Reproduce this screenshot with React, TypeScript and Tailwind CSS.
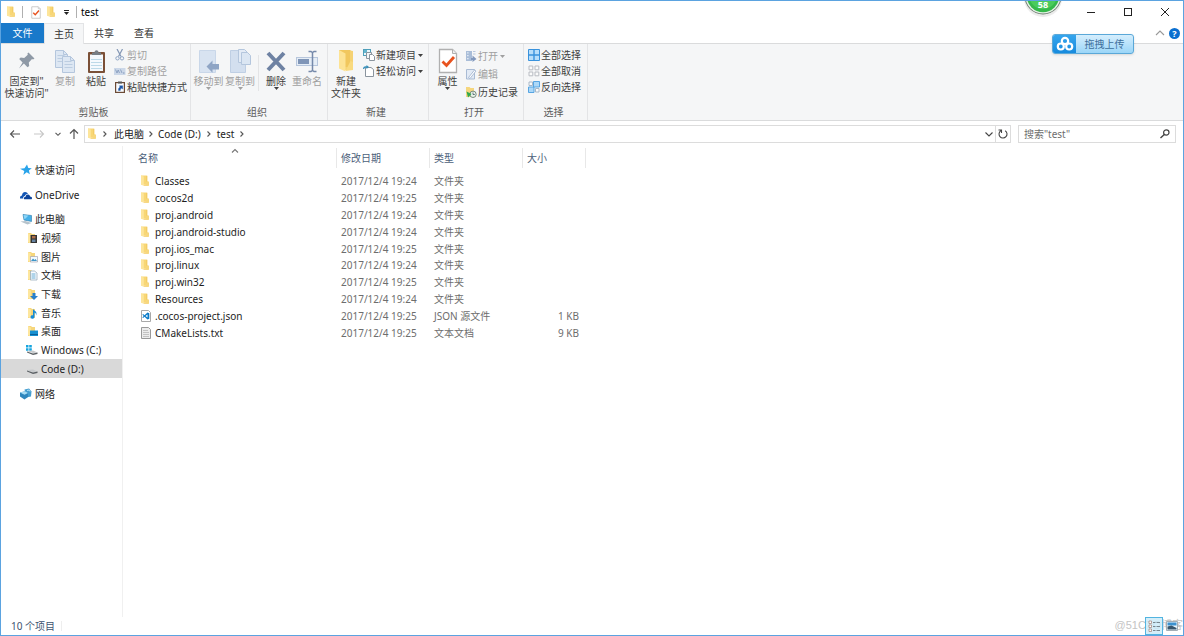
import React from 'react';
import type { ReactNode } from 'react';

function FolderIcon({ className = 'h-3 w-3' }: { className?: string }) {
  return (
    <svg viewBox="1 0 12 12" className={className} aria-hidden="true">
      <path d="M2 .5h5.5v9H2z" fill="#f8d775" />
      <path d="M7 .8h1.4v5.6l1.4.5v3.8H4.6V9.4H7z" fill="#f3cc66" />
      <path d="M2 .5l2.800 1v9.300L2 9.800z" fill="#fde59a" />
      <path d="M7.3 6.4h2.5v4.2H6.3z" fill="#f7d77d" />
    </svg>
  );
}

function BigFolderIcon() {
  return (
    <svg viewBox="0 0 20 26" className="h-[26px] w-5" aria-hidden="true">
      <path d="M3 2h11.5v18H3z" fill="#f1c75d" />
      <path d="M14 2.5l3 .5v19H7v-3h7z" fill="#f5d273" />
      <path d="M3 2l6.5 3.5v18L3 20.5z" fill="#fde394" />
      <path d="M14.5 13l2.5 1v8l-7.500 1z" fill="#f9da7f" />
    </svg>
  );
}

function PinIcon() {
  return (
    <svg viewBox="0 0 20 26" className="h-[26px] w-5" aria-hidden="true">
      <path d="M11.500 4.500l6 6-1.500 1-1-.4-3.200 3.400.4 3.500-1.700 1.300-3.600-3.700L2 20.500l3.600-6-3.400-3.400L3.700 9.500l3.500.4L10.800 6.800l-.4-1.200z" fill="#8e99a6" />
    </svg>
  );
}

function Page({ x, y, w, h }: { x: number; y: number; w: number; h: number }) {
  return (
    <g>
      <path d={`M${x} ${y}h${w - 4}l4 4v${h - 4}h${-w}z`} fill="#dde7f3" stroke="#b4c6dd" />
      <path d={`M${x + w - 4} ${y}v4h4`} fill="none" stroke="#b4c6dd" />
      <path d={`M${x + 2} ${y + 5}h${w - 5}M${x + 2} ${y + 8}h${w - 4}M${x + 2} ${y + 11}h${w - 4}`} stroke="#bccde1" />
    </g>
  );
}

function CopyIcon() {
  return (
    <svg viewBox="0 0 22 26" className="h-[26px] w-[22px]" aria-hidden="true">
      <Page x={1.5} y={2.5} w={12} h={17} />
      <Page x={8.5} y={8.500} w={12} h={16} />
    </svg>
  );
}

function PasteIcon() {
  return (
    <svg viewBox="0 0 20 26" className="h-[26px] w-5" aria-hidden="true">
      <rect x="2" y="4" width="17" height="21" rx="1" fill="#7b5037" />
      <rect x="4" y="6.500" width="13" height="16.500" fill="#f4f9fd" />
      <path d="M5 11.500h11M5 14.500h11M5 17.500h11M5 20.500h11" stroke="#bcd9e8" />
      <path d="M6 7V4.500h2.500C8.500 1.500 12.500 1.500 12.500 4.500H15V7z" fill="#777f86" />
    </svg>
  );
}

function MoveToIcon() {
  return (
    <svg viewBox="0 0 22 26" className="h-[26px] w-[22px]" aria-hidden="true">
      <path d="M1.500 2.500h16v22h-16z" fill="#d8e3f1" stroke="#c9d7e9" />
      <path d="M8.500 18.500l6-6v3.500H21v5.500h-6.500v3.200z" fill="#8fa5c5" />
    </svg>
  );
}

function CopyToIcon() {
  return (
    <svg viewBox="0 0 22 26" className="h-[26px] w-[22px]" aria-hidden="true">
      <path d="M1.500 2.500h15v22h-15z" fill="#d3dfef" stroke="#bfcfe4" />
      <path d="M9.500 1.500h6l3 3v10h-9z" fill="#e3ebf6" stroke="#b4c6dd" />
      <path d="M12.500 4.500h6l3 3v9h-9z" fill="#dbe6f3" stroke="#b4c6dd" />
    </svg>
  );
}

function DeleteIcon() {
  return (
    <svg viewBox="0 0 22 26" className="h-[26px] w-[22px]" aria-hidden="true">
      <path d="M3 5l16 17M19 5L3 22" stroke="#6e82a3" strokeWidth="4" />
    </svg>
  );
}

function RenameIcon() {
  return (
    <svg viewBox="0 0 24 26" className="h-[26px] w-6" aria-hidden="true">
      <rect x="1.500" y="9.500" width="21" height="8" fill="#e5edf6" stroke="#b7c6dc" />
      <rect x="3" y="11" width="11" height="5" fill="#7f95b7" />
      <path d="M13.500 3.500h2.500l1.500 1 1.500-1H21.500M17.500 4v19M13.500 23.500H16l1.500-1 1.500 1h2.500" fill="none" stroke="#7589aa" strokeWidth="1.500" />
    </svg>
  );
}

function CheckPageIcon({ className }: { className: string }) {
  return (
    <svg viewBox="0 0 20 26" className={className} aria-hidden="true">
      <path d="M1.500 1.500h13l4 4v19h-17z" fill="#fff" stroke="#b0b0b0" strokeWidth="1.300" />
      <path d="M14.500 1.500v4h4" fill="#eee" stroke="#b0b0b0" />
      <path d="M4.500 13.500l4 4 7.500-8.500" fill="none" stroke="#e8531f" strokeWidth="2.800" />
    </svg>
  );
}

function Small({ children }: { children: ReactNode }) {
  return (
    <svg viewBox="0 0 12 12" className="h-3 w-3 shrink-0" aria-hidden="true">
      {children}
    </svg>
  );
}

const scissors = (
  <Small>
    <path d="M3 0l4 7.500M8.500 0L4.500 7.500" stroke="#8396b4" strokeWidth="1.200" />
    <circle cx="3.500" cy="9.300" r="1.700" fill="none" stroke="#8fa5c5" />
    <circle cx="8" cy="9.300" r="1.700" fill="none" stroke="#8fa5c5" />
  </Small>
);
const pathIcon = (
  <Small>
    <rect x="0" y="3" width="11.500" height="7" fill="#cbd7e8" />
    <path d="M1.500 4.500L3 8l1.200-3L5.500 8M6.500 4.500L8 8" fill="none" stroke="#8097ba" strokeWidth=".8" />
    <path d="M9 8h1.500" stroke="#8097ba" />
  </Small>
);
const shortcutIcon = (
  <Small>
    <rect x="1.600" y="1.600" width="8.800" height="9.800" fill="#f8fbff" stroke="#6b4a35" strokeWidth="1.200" />
    <path d="M4 .5h4v2H4z" fill="#555" />
    <path d="M4.500 9.500c-.3-2 .4-3 1.700-3.300L5.400 4.800h3.300V8l-.9-.8c-1.300.3-1.600 1-1.500 2.300z" fill="#1c57a8" stroke="#1c57a8" strokeWidth=".4" />
  </Small>
);
const newItem = (
  <Small>
    <rect x=".5" y=".5" width="7" height="6" fill="#e9f6fb" stroke="#4f9fba" />
    <path d="M1 1h3v3H1z" fill="#62b5ce" />
    <path d="M3.500 3.500h5v6h-5z" fill="#f4f6f8" stroke="#8a949e" />
    <path d="M6.500 5.500h3l2 2v4h-5z" fill="#fff" stroke="#8a949e" />
  </Small>
);
const easyAccess = (
  <Small>
    <path d="M2.500 2.500h5.500l2.500 2v7h-8z" fill="#fff" stroke="#8a949e" />
    <path d="M0 4c.2-2.500 1.500-3 3.500-2.800V0L6 2 3.500 4V2.800C2 2.700 1.300 3 1.200 4z" fill="#348fba" />
  </Small>
);
const openIcon = (
  <Small>
    <path d="M1 1h6v10H1z" fill="#a9bdd8" />
    <path d="M2.200 2.200h1.300v1.300H2.200zM2.200 5h1.300v1.300H2.200zM2.200 8h1.300v1.300H2.200z" fill="#eef3f9" />
    <path d="M8 1.500h2.500M8 4h2.500" stroke="#b9c8dd" />
    <path d="M6 8h1.500V5.500L11.500 9 7.500 12v-2H6z" fill="#8198bd" />
  </Small>
);
const editIcon = (
  <Small>
    <path d="M1.500 1.500h8v9.500h-8z" fill="#e2eaf5" stroke="#a9bbd4" />
    <path d="M3.500 9.500L9.500 2l1.500 1-6 7.500z" fill="#fff" stroke="#9aafcc" strokeWidth=".8" />
  </Small>
);
const historyIcon = (
  <Small>
    <path d="M1 1h3.500l1 1H9v9H1z" fill="#f5d67d" />
    <circle cx="8" cy="8.300" r="3.200" fill="#e9f4ea" stroke="#778b7c" />
    <path d="M8 6.500v2h1.800" stroke="#456" fill="none" strokeWidth=".8" />
    <path d="M1.500 5.500l5 2.500L3 11.500z" fill="#2fa84c" />
  </Small>
);
const selectAll = (
  <Small>
    <path d="M.5.500h11v11H.5z" fill="#b8defa" stroke="#3a93dd" />
    <path d="M6 .5v11M.5 6h11" stroke="#3a93dd" strokeWidth="1.400" />
  </Small>
);
const selectNone = (
  <Small>
    <path d="M1 1h3.800v3.800H1zM7 1h3.800v3.800H7zM1 7h3.800v3.800H1zM7 7h3.800v3.800H7z" fill="#fbfbfb" stroke="#b8bcc2" />
  </Small>
);
const selectInvert = (
  <Small>
    <path d="M1 1h3.500v3.500H1zM7.500 7.500H11V11H7.500z" fill="#fbfbfb" stroke="#a8b8c8" />
    <path d="M5.500.500h6V6h-6zM.5 6H6v5.500H.5z" fill="#acd8f8" stroke="#57a5e2" />
  </Small>
);

function Caret({ className = '' }: { className?: string }) {
  return (
    <svg viewBox="0 0 5 3" className={`h-[3px] w-[5px] shrink-0 ${className}`} aria-hidden="true">
      <path d="M0 0h5L2.500 3z" fill="currentColor" />
    </svg>
  );
}

function Chevron({ d, className = '' }: { d: string; className?: string }) {
  return (
    <svg viewBox="0 0 10 10" className={`h-2.5 w-2.5 shrink-0 ${className}`} aria-hidden="true">
      <path d={d} fill="none" stroke="currentColor" strokeWidth="1.100" />
    </svg>
  );
}
const RIGHT = 'M3.500 2.500L6 5 3.500 7.500';
const DOWN = 'M2.500 3.800L5 6.300l2.500-2.500';
const WIDE_DOWN = 'M1.500 3.500L5 7l3.500-3.500';
const UP = 'M1 7l4-4 4 4';

function BigButton({ icon, lines, width, disabled, caret }: { icon: ReactNode; lines: string[]; width: string; disabled?: boolean; caret?: boolean }) {
  return (
    <button type="button" disabled={disabled} className={`flex shrink-0 flex-col items-center self-start whitespace-nowrap ${width} ${disabled ? 'text-[#a0a0a0]' : 'text-[#404040]'}`}>
      <span className="flex h-7 items-center">{icon}</span>
      {lines.map((line) => (
        <span key={line} className="leading-3">{line}</span>
      ))}
      {caret && <Caret />}
    </button>
  );
}

function SmallButton({ icon, label, disabled, caret, height = 'h-4' }: { icon: ReactNode; label: string; disabled?: boolean; caret?: boolean; height?: string }) {
  return (
    <button type="button" disabled={disabled} className={`flex items-center gap-px whitespace-nowrap ${height} ${disabled ? 'text-[#a0a0a0]' : 'text-[#404040]'}`}>
      {icon}
      <span>{label}</span>
      {caret && <Caret className="ml-px" />}
    </button>
  );
}

function Group({ label, width, inset = '', children }: { label: string; width: string; inset?: string; children: ReactNode }) {
  return (
    <section aria-label={label} className={`flex shrink-0 flex-col border-r border-[#e3e4e6] pt-[3px] ${width}`}>
      <div className={`flex h-[58px] ${inset}`}>{children}</div>
      <div className="pr-1 text-center leading-4 text-[#5c5c5c]">{label}</div>
    </section>
  );
}

function Bar() {
  return <span className="h-3 w-px bg-[#b0b0b0]" />;
}

function TitleBar() {
  return (
    <header className="flex h-[22px] shrink-0 items-center justify-between pl-[5px]">
      <div className="flex items-center">
        <FolderIcon className="h-3 w-3" />
        <span className="ml-1 flex"><Bar /></span>
        <button type="button" aria-label="属性" className="ml-[7px]"><CheckPageIcon className="h-[13px] w-3" /></button>
        <button type="button" aria-label="新建文件夹" className="ml-1"><FolderIcon className="h-3 w-3" /></button>
        <button type="button" aria-label="自定义快速访问工具栏" className="ml-1.5 flex flex-col items-center gap-px text-[#222]">
          <span className="h-px w-[5px] bg-[#222]" />
          <Caret />
        </button>
        <span className="ml-[7px] flex"><Bar /></span>
        <h1 className="ml-1 text-black">test</h1>
      </div>
      <div className="flex text-[#222]">
        <button type="button" aria-label="最小化" className="flex h-[22px] w-[37px] items-center justify-center">
          <svg viewBox="0 0 10 10" className="h-2.5 w-2.5"><path d="M1 5.500h8" stroke="currentColor" /></svg>
        </button>
        <button type="button" aria-label="最大化" className="flex h-[22px] w-[37px] items-center justify-center">
          <svg viewBox="0 0 10 10" className="h-2.5 w-2.5"><rect x="1.500" y="1.500" width="7" height="7" fill="none" stroke="currentColor" /></svg>
        </button>
        <button type="button" aria-label="关闭" className="flex h-[22px] w-[37px] items-center justify-center">
          <svg viewBox="0 0 10 10" className="h-2.5 w-2.5"><path d="M1 1l8 8M9 1L1 9" stroke="currentColor" /></svg>
        </button>
      </div>
    </header>
  );
}

function Tabs() {
  return (
    <nav className="flex h-5 shrink-0 items-stretch text-[#333]">
      <button type="button" className="w-[43px] bg-[#1979ca] text-white">文件</button>
      <button type="button" className="z-10 -mb-px w-10 border-x border-t border-[#e3e4e6] bg-[#f5f6f7]">主页</button>
      <button type="button" className="w-10">共享</button>
      <button type="button" className="w-10">查看</button>
      <div className="ml-auto flex items-center gap-1 pr-[3px]">
        <button type="button" aria-label="最小化功能区" className="text-[#999]"><Chevron d={UP} className="block" /></button>
        <button type="button" aria-label="帮助" className="flex h-[11px] w-[11px] items-center justify-center rounded-full bg-[#0a6fd0] text-[9px] leading-none font-bold text-white">?</button>
      </div>
    </nav>
  );
}

function Ribbon() {
  return (
    <div className="flex h-[78px] shrink-0 border-y border-[#dadbdc] bg-[#f5f6f7]">
      <Group label="剪贴板" width="w-[190px]">
        <BigButton icon={<PinIcon />} lines={['固定到"', '快速访问"']} width="w-[51px]" />
        <BigButton icon={<CopyIcon />} lines={['复制']} width="w-[26px]" disabled />
        <BigButton icon={<PasteIcon />} lines={['粘贴']} width="w-[36px]" />
        <div>
          <SmallButton icon={scissors} label="剪切" disabled />
          <SmallButton icon={pathIcon} label="复制路径" disabled />
          <SmallButton icon={shortcutIcon} label="粘贴快捷方式" />
        </div>
      </Group>
      <Group label="组织" width="w-[137px]" inset="pl-0.5">
        <BigButton icon={<MoveToIcon />} lines={['移动到']} width="w-[31px]" disabled caret />
        <BigButton icon={<CopyToIcon />} lines={['复制到']} width="w-[32px]" disabled caret />
        <span className="mx-0.5 mt-2 h-9 w-px bg-[#e3e4e6]" />
        <BigButton icon={<DeleteIcon />} lines={['删除']} width="w-[30px]" caret />
        <BigButton icon={<RenameIcon />} lines={['重命名']} width="w-[32px]" disabled />
      </Group>
      <Group label="新建" width="w-[101px]" inset="pl-px">
        <BigButton icon={<BigFolderIcon />} lines={['新建', '文件夹']} width="w-[34px]" />
        <div>
          <SmallButton icon={newItem} label="新建项目" caret />
          <SmallButton icon={easyAccess} label="轻松访问" caret />
        </div>
      </Group>
      <Group label="打开" width="w-[95px]" inset="pl-px">
        <BigButton icon={<CheckPageIcon className="h-[26px] w-5" />} lines={['属性']} width="w-[35px]" caret />
        <div>
          <SmallButton icon={openIcon} label="打开" disabled caret height="h-[18px]" />
          <SmallButton icon={editIcon} label="编辑" disabled height="h-[18px]" />
          <SmallButton icon={historyIcon} label="历史记录" height="h-[18px]" />
        </div>
      </Group>
      <Group label="选择" width="w-16" inset="pl-1">
        <div>
          <SmallButton icon={selectAll} label="全部选择" />
          <SmallButton icon={selectNone} label="全部取消" />
          <SmallButton icon={selectInvert} label="反向选择" />
        </div>
      </Group>
    </div>
  );
}

function AddressBar() {
  return (
    <div className="flex h-[25px] shrink-0 items-center pr-[7px] pl-2 text-[#555]">
      <button type="button" aria-label="后退" className="w-[13px]">
        <svg viewBox="0 0 12 12" className="h-3 w-3"><path d="M1.500 6H11M5 2.500L1.500 6 5 9.500" fill="none" stroke="currentColor" strokeWidth="1.100" /></svg>
      </button>
      <button type="button" aria-label="前进" disabled className="ml-[11px] w-[13px] text-[#c8c8c8]">
        <svg viewBox="0 0 12 12" className="h-3 w-3"><path d="M1 6h9.500M7 2.500L10.500 6 7 9.500" fill="none" stroke="currentColor" strokeWidth="1.100" /></svg>
      </button>
      <button type="button" aria-label="最近位置" className="ml-[7px]"><Chevron d={DOWN} className="block" /></button>
      <button type="button" aria-label="上移" className="ml-[5px]">
        <svg viewBox="0 0 12 12" className="block h-3 w-3"><path d="M6 11V1.500M2 5.500l4-4 4 4" fill="none" stroke="currentColor" strokeWidth="1.200" /></svg>
      </button>
      <div className="ml-1 flex h-[18px] flex-1 items-center border border-[#dcdcdc] text-[#222]">
        <FolderIcon className="ml-0.5 h-3 w-3 shrink-0" />
        <Chevron d={RIGHT} className="ml-px text-[#555]" />
        <a href="#pc" className="ml-1">此电脑</a>
        <Chevron d={RIGHT} className="mx-0.5 text-[#555]" />
        <a href="#d">Code (D:)</a>
        <Chevron d={RIGHT} className="mx-[3px] text-[#555]" />
        <a href="#test">test</a>
        <Chevron d={RIGHT} className="mx-[3px] text-[#555]" />
        <button type="button" aria-label="以前的位置" className="ml-auto pr-px text-[#444]"><Chevron d={WIDE_DOWN} className="block" /></button>
        <button type="button" aria-label="刷新" className="flex h-4 w-[15px] items-center justify-center border-l border-[#dcdcdc] text-[#444]">
          <svg viewBox="0 0 12 12" className="h-3 w-3"><path d="M4 2.600A4 4 0 1 0 8.200 2.700M1.500 2h3v3" fill="none" stroke="currentColor" strokeWidth="1.100" /></svg>
        </button>
      </div>
      <label className="ml-[7px] flex h-[18px] w-[158px] items-center border border-[#dcdcdc] pr-1 pl-[5px]">
        <input type="text" aria-label="搜索" placeholder={'搜索"test"'} className="min-w-0 flex-1 bg-transparent outline-none placeholder:text-[#6d6d6d]" />
        <svg viewBox="0 0 12 12" className="h-3 w-3 text-[#444]"><circle cx="7.300" cy="4.500" r="2.700" fill="none" stroke="currentColor" strokeWidth="1.200" /><path d="M5.300 6.500L1.500 10" stroke="currentColor" strokeWidth="1.400" /></svg>
      </label>
    </div>
  );
}

const star = (
  <Small><path d="M7 .5l1.300 3.600 3.500.1-2.900 2.300 1 3.800-3.200-2-3.400 2.600 1-4L0 4.800l4.500-.5z" fill="#2aa4ea" /></Small>
);
const oneDrive = (
  <Small><path d="M0 9.500c-.2-1.800.8-2.900 2-3 .1-2 1.300-3.500 3.100-3.500 1.400 0 2.200.7 2.800 1.900C6 4.700 5 6 4.900 7c-1.500.3-2 1.300-1.600 2.500z" fill="#1356b5" /><path d="M4.200 10.200C3.500 9 4.200 7.800 5.600 7.700 5.800 6 7 5.300 8.200 5.500c1.100.2 1.700.9 1.900 1.900 1.800.1 2.500 1.600 1.500 2.800z" fill="#0b439b" /></Small>
);
const pc = (
  <Small><path d="M3 1.500l8.500 1v6L4 7z" fill="#45b0e9" stroke="#2b79a8" strokeWidth=".6" /><path d="M3.500 2l5 .5L4.500 6.500z" fill="#8ed6f8" /><path d="M.5 8.500l5-.5 6 2-4 1.500z" fill="#b6c3cc" /></Small>
);
const network = (
  <Small><path d="M4.500 1.500L9 .5l2.500 3-.5 5-5 1z" fill="#459ed0" /><path d="M0 4.500l5-1.300L8 5v4l-3.500 2.500L0 8.500z" fill="#2f86bd" /><path d="M0 4.500l5-1.300L8 5 4.500 6.800z" fill="#a7dcf4" /><path d="M7 2.500l2-.5 1 1.500" stroke="#b5e1f5" fill="none" /></Small>
);
function Overlay({ children }: { children: ReactNode }) {
  return <Small><path d="M2 1h3l1 1h3v9H2z" fill="#f6d67b" /><path d="M2 1l2.800 1.500v9L2 10z" fill="#fde69d" />{children}</Small>;
}
const drive = <path d="M1 7l6-.5 4.500 2-4.500.5z" fill="#c6c9cc" />;
const driveFront = <path d="M1 7.500l6 2 4.500-1v1.500L7 11 1 8.500z" fill="#5c6165" />;

const places: { id: string; label: string; icon: ReactNode; active?: boolean; top?: boolean }[] = [
  { id: 'pc', label: '此电脑', top: true, icon: pc },
  { id: 'video', label: '视频', icon: <Overlay><path d="M4.500 3h6.500v8H4.500z" fill="#333" /><path d="M6 4h3.500v2.500H6z" fill="#ad6e48" /><path d="M6 7.500h3.500V10H6z" fill="#6784a3" /></Overlay> },
  { id: 'pictures', label: '图片', icon: <Overlay><path d="M4.500 5.500h7v5.500h-7z" fill="#f3fbff" stroke="#99a" strokeWidth=".6" /><path d="M5 10l2-2.500L8.500 9l1-1 1.500 2z" fill="#3d95c7" /></Overlay> },
  { id: 'documents', label: '文档', icon: <Overlay><path d="M4.500 2h4l2.500 2v7H4.500z" fill="#f9fcff" stroke="#8ea3b4" strokeWidth=".7" /><path d="M5.500 5h4M5.500 7h4M5.500 9h4" stroke="#56a4cf" strokeWidth=".9" /></Overlay> },
  { id: 'downloads', label: '下载', icon: <Overlay><path d="M6.500 5h3v3H12l-4 4-4-4h2.500z" fill="#277fcb" /></Overlay> },
  { id: 'music', label: '音乐', icon: <Overlay><path d="M7 1.500c.2 2 3.500 2 3.500 5 0 1-.5 2-.5 2 .2-2-.7-2.700-1.500-3V10a2 1.700 0 1 1-1.500-1.700z" fill="#158bd8" /></Overlay> },
  { id: 'desktop', label: '桌面', icon: <Overlay><path d="M4 5.500h8V11H4z" fill="#168fd0" /><path d="M4 9.500h8" stroke="#0a5f99" /></Overlay> },
  { id: 'c', label: 'Windows (C:)', icon: <Small><path d="M0 1h2.500v2.500H0zM3.200 1h2.600v2.500H3.200zM0 4.200h2.500v2.500H0zM3.200 4.200h2.600v2.500H3.200z" fill="#16a5df" />{drive}{driveFront}</Small> },
  { id: 'd', label: 'Code (D:)', active: true, icon: <Small>{drive}{driveFront}</Small> },
];

function Sidebar() {
  return (
    <nav className="flex w-[122px] shrink-0 flex-col border-r border-[#f0f0f0] pt-3.5 text-[#1e1e1e]">
      <a href="#quick" className="flex h-[19px] items-center gap-[3px] pl-[19px]">{star}快速访问</a>
      <a href="#onedrive" className="mt-1.5 flex h-[19px] items-center gap-[3px] pl-[19px]">{oneDrive}OneDrive</a>
      <ul className="mt-1.5 flex h-[168px] flex-col">
        {places.map((p) => (
          <li key={p.id} className="flex flex-1">
            <a href={`#${p.id}`} className={`flex flex-1 items-center gap-[3px] ${p.top ? 'pl-[19px]' : 'pl-[25px]'} ${p.active ? 'bg-[#d9d9d9]' : ''}`}>{p.icon}{p.label}</a>
          </li>
        ))}
      </ul>
      <a href="#network" className="mt-1.5 flex h-[19px] items-center gap-[3px] pl-[19px]">{network}网络</a>
    </nav>
  );
}

const files = [
  ['Classes', '24'],
  ['cocos2d', '25'],
  ['proj.android', '24'],
  ['proj.android-studio', '24'],
  ['proj.ios_mac', '25'],
  ['proj.linux', '24'],
  ['proj.win32', '25'],
  ['Resources', '24'],
  ['.cocos-project.json', '25', 'JSON 源文件', '1 KB'],
  ['CMakeLists.txt', '25', '文本文档', '9 KB'],
];

function FileIcon({ name }: { name: string }) {
  if (name.endsWith('.json')) {
    return (
      <Small>
        <path d="M1.500.500h7l2 2v9h-9z" fill="#fff" stroke="#a8a8a8" />
        <path d="M7.500 2.500l1.800.8v5.400l-1.800.8-3-2.700-1.400 1.100-.8-.5L3.700 6 2.300 4.600l.8-.5 1.400 1.100zM7.500 4.500L5.500 6l2 1.500z" fill="#0b7bc8" fillRule="evenodd" />
      </Small>
    );
  }
  if (name.endsWith('.txt')) {
    return (
      <Small>
        <path d="M1.500.500h7l2 2v9h-9z" fill="#ececec" stroke="#999" />
        <path d="M3 3.500h5M3 5.500h6M3 7.500h6M3 9.500h6" stroke="#c2c2c2" />
      </Small>
    );
  }
  return <FolderIcon className="h-3 w-3 shrink-0" />;
}

function FileTable() {
  const head = 'flex h-5 items-center border-r border-[#e8e8e8] font-normal';
  return (
    <div className="min-w-0 flex-1 pl-3.5">
      <table className="h-[195px] w-[449px] table-fixed border-collapse text-left text-[#6d6d6d]">
        <colgroup>
          <col className="w-[200px]" />
          <col className="w-[93px]" />
          <col className="w-[93px]" />
          <col className="w-[63px]" />
        </colgroup>
        <thead className="text-[#4c607a]">
          <tr className="h-[27px]">
            <th className="relative p-0 pb-[3px]">
              <div className={`${head} pl-px`}>名称</div>
              <Chevron d="M2 6.500l3-3 3 3" className="absolute top-0 left-[93px] text-[#777]" />
            </th>
            <th className="p-0 pb-[3px]"><div className={`${head} pl-1`}>修改日期</div></th>
            <th className="p-0 pb-[3px]"><div className={`${head} pl-1`}>类型</div></th>
            <th className="p-0 pb-[3px]"><div className={`${head} pl-1`}>大小</div></th>
          </tr>
        </thead>
        <tbody>
          {files.map(([name, minute, type = '文件夹', size = '']) => (
            <tr key={name}>
              <td className="p-0 pl-[3px] text-[#1e1e1e]"><div className="flex items-center gap-[3px] leading-4"><FileIcon name={name} />{name}</div></td>
              <td className="p-0 pl-1 leading-4">2017/12/4 19:{minute}</td>
              <td className="p-0 pl-1 leading-4">{type}</td>
              <td className="p-0 pr-[7px] text-right leading-4">{size}</td>
            </tr>
          ))}
        </tbody>
      </table>
    </div>
  );
}

function StatusBar() {
  return (
    <footer className="relative flex h-[18px] shrink-0 items-center pl-2.5 text-[#3d5370]">
      <span>10 个项目</span>
      <span className="ml-1.5 h-2.5 w-px bg-[#eee]" />
      <span className="absolute right-0 bottom-0 font-['Liberation_Sans','Noto_Sans_CJK_SC',sans-serif] text-[11px] leading-5 text-[#c4c4c4]">@51CTO博客</span>
      <div className="relative ml-auto flex items-center pr-[5px]">
        <button type="button" aria-label="详细信息" className="flex h-[18px] w-[18px] items-center justify-center border border-[#52b4e0] bg-[#c9eaf8]/80">
          <svg viewBox="0 0 12 12" className="h-3 w-3"><path d="M1 1h2.500v2.500H1zM1 5h2.500v2.500H1zM1 9h2.500v2.500H1z" fill="#fff" stroke="#a48074" strokeWidth=".7" /><path d="M5 2.500h2.500M8.500 2.500H12M5 6.500h2.500M8.500 6.500H12M5 10.500h2.500M8.500 10.500H12" stroke="#77868f" /></svg>
        </button>
        <button type="button" aria-label="大图标" className="ml-[3px]">
          <svg viewBox="0 0 12 10" className="block h-2.5 w-3"><path d="M.5.500h11v9H.5z" fill="#eaf6fd" stroke="#a3adb5" /><path d="M1.500 1.500h9v3h-9z" fill="#3c91ce" /><path d="M1.500 5.500l4-1 5 2.500v1.500h-9z" fill="#39556b" /></svg>
        </button>
      </div>
    </footer>
  );
}

function Floating() {
  return (
    <>
      <div className="absolute -top-px right-[118px] h-[22px] w-11 overflow-hidden">
        <svg viewBox="0 0 44 22" className="block h-[22px] w-11" aria-hidden="true">
          <circle cx="22" cy="-2" r="19" fill="#777" opacity=".15" />
          <circle cx="22" cy="-4" r="18.500" fill="#6a7a6d" />
          <circle cx="22" cy="-4" r="17.600" fill="#e7f2e8" />
          <circle cx="22" cy="-4" r="16.200" fill="#35b94b" />
          <ellipse cx="22" cy="-5" rx="14" ry="14" fill="#4acb5c" />
        </svg>
        <span className="absolute inset-x-0 top-0 text-center text-[9px] leading-[10px] font-bold text-white">58</span>
      </div>
      <button type="button" className="absolute top-[33px] right-[49px] flex h-5 w-[82px] items-stretch overflow-hidden rounded-[3px] border border-[#5aa8d8] bg-linear-to-b from-[#d5eefd] to-[#9bd6f8] text-[#3d6f9c] shadow-sm">
        <span className="flex w-[23px] items-center justify-center bg-linear-to-b from-[#35a5ed] to-[#168bde]">
          <svg viewBox="0 0 18 16" className="h-4 w-[18px]" aria-hidden="true">
            <g fill="none" stroke="#fff" strokeWidth="2.200"><circle cx="9" cy="5" r="3.200" /><circle cx="4.800" cy="10.500" r="3" /><circle cx="13.200" cy="10.500" r="3" /></g>
          </svg>
        </span>
        <span className="flex flex-1 items-center justify-center">拖拽上传</span>
      </button>
    </>
  );
}

export default function App() {
  return (
    <div className="relative flex min-h-screen flex-col overflow-hidden border border-[#5ba3e0] bg-white font-['Noto_Sans','Noto_Sans_CJK_SC',sans-serif] text-[10px] leading-4">
      <TitleBar />
      <Tabs />
      <Ribbon />
      <AddressBar />
      <main className="flex flex-1">
        <Sidebar />
        <FileTable />
      </main>
      <StatusBar />
      <Floating />
    </div>
  );
}
